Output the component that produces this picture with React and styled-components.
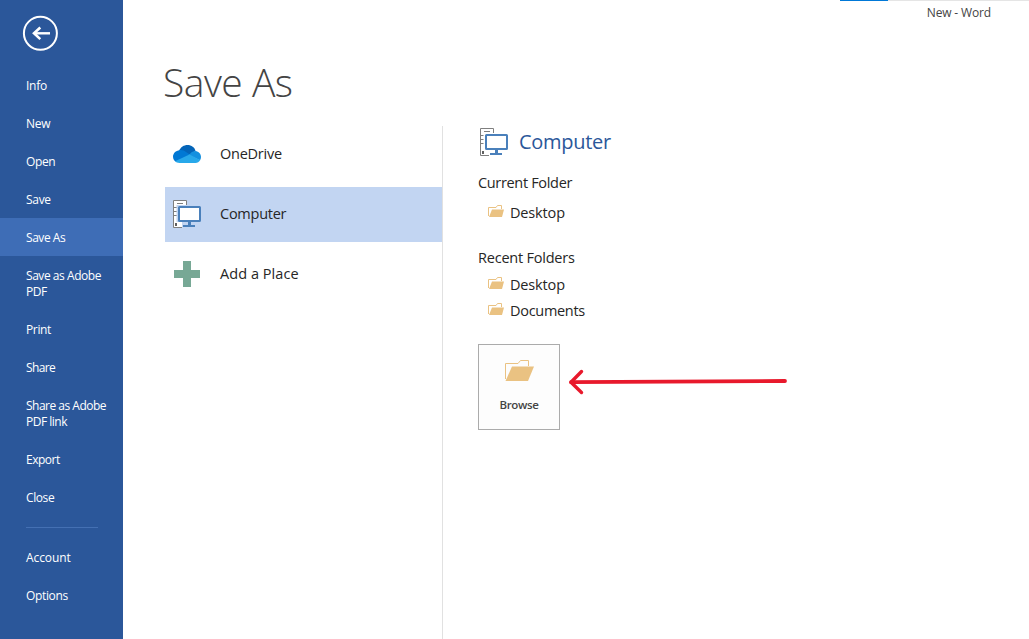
import React from "react";
import styled, { createGlobalStyle } from "styled-components";

const Global = createGlobalStyle`
  *, *::before, *::after { box-sizing: border-box; }
  body { margin: 0; background: #fff; }
`;

const Window = styled.div`
  position: relative;
  display: flex;
  width: 1029px;
  height: 639px;
  overflow: hidden;
  background: #fff;
  color: #262626;
  font-family: "Open Sans", "Noto Sans", sans-serif;
`;

const Sidebar = styled.nav`
  width: 123px;
  flex: none;
  background: #2b579a;
  color: #fff;
`;

const BackButton = styled.button`
  display: block;
  width: 36px;
  height: 36px;
  margin: 15px 0 15px 22px;
  padding: 0;
  border: 0;
  background: none;
  svg { display: block; }
`;

const NavItem = styled.div`
  padding: 12px 0 10px 26px;
  font-size: 12px;
  font-weight: 500;
  line-height: 16px;
  letter-spacing: ${(p) => p.$track ?? -0.25}px;
  white-space: pre-line;
  background: ${(p) => (p.$active ? "#3e6db6" : "transparent")};
`;

const NavDivider = styled.hr`
  width: 72px;
  height: 1px;
  margin: 11px 0 10px 26px;
  border: 0;
  background: #4470b3;
`;

const Content = styled.main`
  flex: 1;
  display: flex;
  flex-direction: column;
`;

const TitleBar = styled.header`
  display: flex;
  justify-content: flex-end;
  height: 26px;
  padding: 5px 38px 0 0;
  font-size: 12px;
  line-height: 16px;
  letter-spacing: ${(p) => p.$track}px;
  color: #444;
  background:
    linear-gradient(#0078d7, #0078d7) 717px 0 / 48px 1px no-repeat,
    linear-gradient(#e5e5e5, #e5e5e5) 765px 0 / 141px 1px no-repeat;
`;

const PageTitle = styled.h1`
  height: 100px;
  margin: 0;
  padding: 29px 0 0 40px;
  font-size: 39px;
  font-weight: 300;
  line-height: 54px;
  letter-spacing: ${(p) => p.$track}px;
  color: #444;
`;

const Columns = styled.div`
  flex: 1;
  display: flex;
`;

const Places = styled.div`
  display: flex;
  flex-direction: column;
  gap: 5px;
  width: 320px;
  padding: 1px 0 0 42px;
  border-right: 1px solid #e1e1e1;
`;

const Place = styled.div`
  display: flex;
  align-items: center;
  gap: 18px;
  height: 55px;
  padding-left: 7px;
  font-size: 14.5px;
  letter-spacing: ${(p) => p.$track}px;
  background: ${(p) => (p.$active ? "#c2d5f2" : "transparent")};
  svg { flex: none; margin-bottom: 2px; }
`;

const PlaceLabel = styled.span`
  line-height: 20px;
  padding-bottom: 1px;
`;

const Details = styled.section`
  padding: 1px 0 0 35px;
`;

const DetailsHeader = styled.h2`
  display: flex;
  align-items: center;
  gap: 10px;
  height: 30px;
  margin: 0;
  padding-left: 1px;
  font-size: 20px;
  font-weight: 400;
  line-height: 28px;
  letter-spacing: ${(p) => p.$track}px;
  color: #2b579a;
`;

const GroupTitle = styled.h3`
  margin: ${(p) => p.$top}px 0 0;
  font-size: 14.5px;
  font-weight: 400;
  line-height: 20px;
  letter-spacing: ${(p) => p.$track}px;
`;

const Folder = styled.div`
  display: flex;
  align-items: center;
  gap: 6px;
  height: 26px;
  margin-top: ${(p) => p.$top ?? 0}px;
  padding-left: 10px;
  font-size: 14.5px;
  line-height: 20px;
  letter-spacing: ${(p) => p.$track}px;
  svg { margin-bottom: 5px; }
`;

const BrowseButton = styled.button`
  display: flex;
  flex-direction: column;
  align-items: center;
  width: 82px;
  height: 86px;
  margin-top: 20px;
  padding: 13px 0 0;
  border: 1px solid #ababab;
  background: #fdfdfd;
  color: #444;
  font: 600 11.5px/16px "Open Sans", "Noto Sans", sans-serif;
  letter-spacing: -0.4px;
`;

const BrowseLabel = styled.span`
  margin-top: 15px;
`;

const Annotation = styled.svg`
  position: absolute;
  left: 564px;
  top: 364px;
`;

const BackIcon = () => (
  <svg width="36" height="36" viewBox="0 0 36 36" fill="none" stroke="#fff">
    <circle cx="18.4" cy="18.3" r="16.5" strokeWidth="2" />
    <path d="M28 18.3H12" strokeWidth="2.4" />
    <path d="M18.3 12.5L12 18.3L18.3 24.1" strokeWidth="2.6" />
  </svg>
);

const ComputerIcon = ({ paper = "#fff" }) => (
  <svg width="30" height="30" viewBox="0 0 30 30" fill="none">
    <path d="M1.500 1.500H14.500V28.500H1.500Z" fill="#fff" stroke="#7f7f7f" />
    <path d="M5 4.500H11M2 8.500H5M2 12.500H5M2 16.500H5" stroke="#7f7f7f" />
    <path d="M3 24H5V27H3Z" fill="#606060" />
    <path d="M4.500 6H30V23H24V29H10V23H4.500Z" fill={paper} />
    <rect x="7" y="8" width="21" height="14" rx="0.500" fill="#fff" stroke="#4a80bb" strokeWidth="2" />
    <path d="M16 23H19V26H23V28H11V26H16Z" fill="#4a80bb" />
  </svg>
);

const OneDriveIcon = () => (
  <svg width="30" height="20" viewBox="0 0 30 20">
    <path d="M7 7C8.500 3 12 1 15.500 1C19.500 1 22.700 3.500 23.500 7L17 11Z" fill="#0364b8" />
    <path d="M7.500 6.200C10 5.800 12.500 6.700 14 8L20 12L5 18.200C2.500 17.500 1 15.300 1 12.800C1 9.300 3.800 6.500 7.500 6.200Z" fill="#0078d4" />
    <path d="M18 10C19.500 7.800 21.500 7 23.500 7C26.700 7.300 29 9.900 29 13C29 14.200 28.700 15.200 28 16.200L16 10.900Z" fill="#1490df" />
    <path d="M3 17.300L17.500 10.500L28.200 16C27.200 18 25.500 19 23.500 19H7.500C5.700 19 4.200 18.400 3 17.300Z" fill="#28a8ea" />
  </svg>
);

const PlusIcon = () => (
  <svg width="30" height="30" viewBox="0 0 30 30">
    <path d="M11 2H19V11H28V19H19V28H11V19H2V11H11Z" fill="#77a895" />
  </svg>
);

const FolderIcon = ({ large }) =>
  large ? (
    <svg width="30" height="24" viewBox="0 0 30 24">
      <path d="M1.500 21V5.500H14L16.500 2.500H24.500V8" fill="none" stroke="#eac282" />
      <path d="M8 8.500H30L24 23H1.500Z" fill="#eac282" />
    </svg>
  ) : (
    <svg width="16" height="14" viewBox="0 0 16 14">
      <path d="M0.500 12V3.500H8L9.500 1.500H13.500V5" fill="none" stroke="#eac282" />
      <path d="M4 5.500H16L14 13H1Z" fill="#eac282" />
    </svg>
  );

const PRIMARY = [
  { label: "Info" },
  { label: "New" },
  { label: "Open", track: -0.4 },
  { label: "Save", track: -0.3 },
  { label: "Save As", active: true, track: -0.45 },
  { label: "Save as Adobe\nPDF", track: -0.45 },
  { label: "Print", track: -0.35 },
  { label: "Share", track: -0.6 },
  { label: "Share as Adobe\nPDF link", track: -0.5 },
  { label: "Export", track: -0.5 },
  { label: "Close", track: -0.4 },
];
const SECONDARY = [
  { label: "Account", track: -0.1 },
  { label: "Options", track: -0.35 },
];

const renderNav = (item) => (
  <NavItem key={item.label} $active={item.active} $track={item.track}>
    {item.label}
  </NavItem>
);

export default function App() {
  return (
    <Window>
      <Global />
      <Sidebar>
        <BackButton aria-label="Back"><BackIcon /></BackButton>
        {PRIMARY.map(renderNav)}
        <NavDivider />
        {SECONDARY.map(renderNav)}
      </Sidebar>
      <Content>
        <TitleBar $track={-0.15}>New - Word</TitleBar>
        <PageTitle $track={-0.5}>Save As</PageTitle>
        <Columns>
          <Places>
            <Place $track={-0.25}><OneDriveIcon /><PlaceLabel>OneDrive</PlaceLabel></Place>
            <Place $active $track={-0.25}><ComputerIcon paper="#c2d5f2" /><PlaceLabel>Computer</PlaceLabel></Place>
            <Place $track={0.05}><PlusIcon /><PlaceLabel>Add a Place</PlaceLabel></Place>
          </Places>
          <Details>
            <DetailsHeader $track={-0.3}><ComputerIcon />Computer</DetailsHeader>
            <GroupTitle $top={16} $track={-0.33}>Current Folder</GroupTitle>
            <Folder $top={7} $track={-0.15}><FolderIcon />Desktop</Folder>
            <GroupTitle $top={22} $track={-0.22}>Recent Folders</GroupTitle>
            <Folder $top={4} $track={-0.15}><FolderIcon />Desktop</Folder>
            <Folder $track={-0.3}><FolderIcon />Documents</Folder>
            <BrowseButton><FolderIcon large /><BrowseLabel>Browse</BrowseLabel></BrowseButton>
          </Details>
        </Columns>
      </Content>
      <Annotation width="230" height="36" viewBox="0 0 230 36" fill="none" stroke="#e8192c" strokeLinecap="round" strokeLinejoin="round">
        <path d="M7 18.200L221 17" strokeWidth="3.800" />
        <path d="M17.500 7.500L7 18.200L17.500 28.500" strokeWidth="3.400" />
      </Annotation>
    </Window>
  );
}
